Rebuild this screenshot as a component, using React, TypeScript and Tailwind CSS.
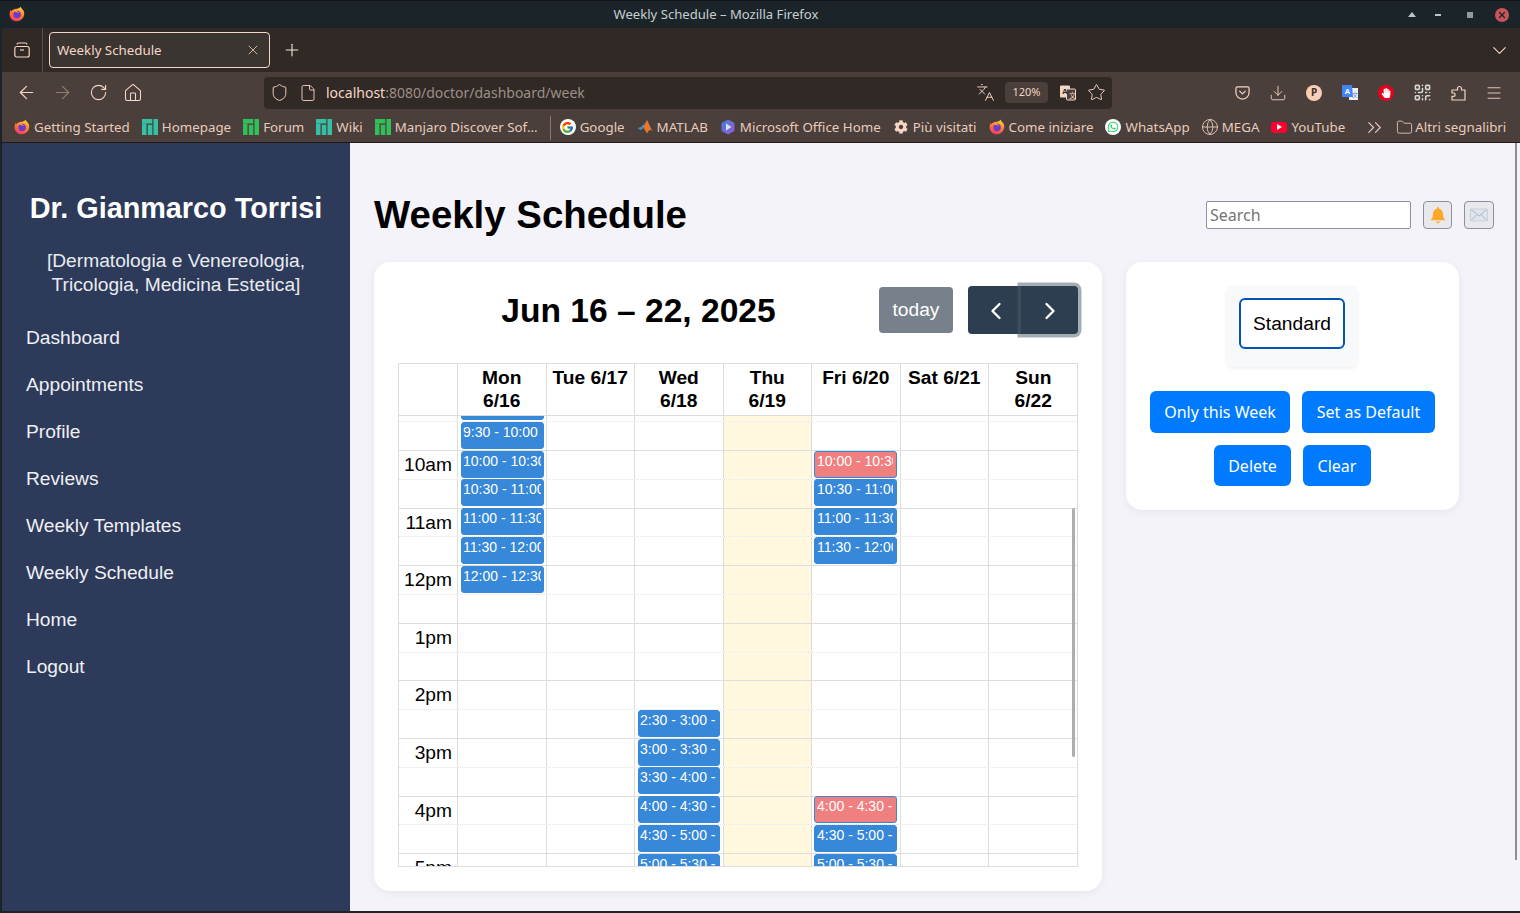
import React from 'react';
import {
  ArrowLeft, ArrowRight, ChevronDown, ChevronLeft, ChevronRight, ChevronsRight, Download, File, Folder, Globe,
  Home, Languages, Menu, Plus, QrCode, RotateCw, Shield, Star, X,
} from 'lucide-react';
import { FaCog, FaHandPaper, FaWhatsapp } from 'react-icons/fa';
import { FcGoogle } from 'react-icons/fc';

const FirefoxLogo = ({ id, size = 16 }: { id: string; size?: number }) => (
  <svg width={size} height={size} viewBox="0 0 16 16" className="shrink-0">
    <defs>
      <linearGradient id={id} x1="0.7" y1="0" x2="0.3" y2="1">
        <stop offset="0" stopColor="#ffd53d" />
        <stop offset="0.5" stopColor="#ff7a2f" />
        <stop offset="1" stopColor="#f5386b" />
      </linearGradient>
    </defs>
    <path d="M11.5 0.5c.3 1.5 1.5 2.2 2.6 3.6 1.6 2.2 1.6 5.6-.2 8-1.5 2-3.6 3.2-5.9 3.2C3.8 15.3.6 12.2.6 8.2c0-1.5.5-3.3 1.3-4.4 0 .6.2 1 .5 1.4.7-1 1.8-1.8 3-2C7 2.800 10.800 2.500 11.500.5z" fill={`url(#${id})`} />
    <circle cx="8.100" cy="8.500" r="3.700" fill="#6d3bc9" />
    <path d="M1.800 5.500c1.700-.4 3.600-.2 5 .6 1 .5 2.300.5 3.200 1-.4-1.400-1.800-2.400-3.400-2.400-1.900 0-3.600.1-4.800.8z" fill="#ff9a2e" />
  </svg>
);

const ManjaroLogo = ({ color }: { color: string }) => (
  <svg width="16" height="16" viewBox="0 0 16 16" className="shrink-0" fill={color}>
    <rect x="0" y="0" width="10.300" height="4.500" />
    <rect x="0" y="4.500" width="4.500" height="11.500" />
    <rect x="5.800" y="5.800" width="4.500" height="10.200" />
    <rect x="11.500" y="0" width="4.500" height="16" />
  </svg>
);

const GoogleIcon = () => (
  <span className="w-4 h-4 rounded-full bg-white flex items-center justify-center shrink-0">
    <FcGoogle size={13} />
  </span>
);

const MatlabIcon = () => (
  <svg width="16" height="16" viewBox="0 0 16 16" className="shrink-0">
    <path d="M0.500 9.300 4.600 7.500 6.300 8.900 4 11.300z" fill="#3f8fc4" />
    <path d="M4.600 7.500 7.600 5.100 9.800 1.300 6.300 8.900z" fill="#4fa6d6" />
    <path d="M9.800 1.300c1.200 0 2.800 6.300 5.700 10.200-1.300-.6-2.300-.9-3.200-.2-.9.700-1.600 2.300-2.400 3.300-.8-2.200-2-4-3.600-5.700z" fill="#e8762b" />
  </svg>
);

const OfficeIcon = () => (
  <svg width="16" height="16" viewBox="0 0 16 16" className="shrink-0">
    <defs>
      <linearGradient id="officeGrad" x1="0" y1="0" x2="1" y2="1">
        <stop offset="0" stopColor="#3f7fe0" />
        <stop offset="1" stopColor="#9a5ad0" />
      </linearGradient>
    </defs>
    <path d="M8 .5 14.500 4v8L8 15.500 1.500 12V4z" fill="url(#officeGrad)" />
    <path d="M6 4.500l5.500 3.500L6 11.500z" fill="#d7e4fb" />
  </svg>
);

const YoutubeIcon = () => (
  <span className="w-4 h-[11px] rounded-[3px] bg-[#ff0033] flex items-center justify-center shrink-0">
    <span className="w-0 h-0 border-y-[3px] border-y-transparent border-l-[5px] border-l-white" />
  </span>
);

const WhatsappIcon = () => (
  <span className="w-4 h-4 rounded-full bg-white flex items-center justify-center shrink-0">
    <FaWhatsapp size={12} color="#25d366" />
  </span>
);

const PageTranslate = () => (
  <svg width="18" height="18" viewBox="0 0 18 18">
    <rect x="1" y="1.500" width="10" height="12" rx="1" fill="#f5d5c5" />
    <rect x="7.500" y="5" width="9" height="11" rx="1" fill="#4a3f3a" stroke="#f5d5c5" />
    <text x="3" y="10" fontSize="8" fontWeight="700" fill="#2f2925" fontFamily="Liberation Sans">A</text>
    <text x="10" y="13.500" fontSize="7" fill="#f5d5c5" fontFamily="Noto Sans CJK SC">文</text>
  </svg>
);

const GoogleTranslate = () => (
  <svg width="16" height="16" viewBox="0 0 16 16">
    <rect x="7" y="3" width="9" height="12" fill="#f1f1f1" />
    <path d="M0 0h10l1 12H0z" fill="#4285f4" />
    <text x="2.500" y="8.500" fontSize="8" fontWeight="700" fill="#fff" fontFamily="Liberation Sans">A</text>
    <text x="10" y="12" fontSize="6" fill="#4285f4" fontFamily="Noto Sans CJK SC">文</text>
  </svg>
);

const PocketIcon = () => (
  <svg width="15" height="15" viewBox="0 0 16 16" fill="none" stroke="currentColor" strokeWidth="1.300">
    <path d="M2.500 2h11A1.500 1.500 0 0 1 15 3.500V8a7 7 0 0 1-14 0V3.500A1.500 1.500 0 0 1 2.500 2z" />
    <path d="M5 6.500l3 3 3-3" strokeLinecap="round" strokeLinejoin="round" />
  </svg>
);

const ExtensionIcon = () => (
  <svg width="16" height="16" viewBox="0 0 16 16" fill="none" stroke="currentColor" strokeWidth="1.200" strokeLinejoin="round">
    <path d="M2 15H15V5H11.500V3.500A2 2 0 0 0 7.500 3.500V5H2V8H3.500A1.700 1.700 0 0 1 3.500 11.400H2Z" />
  </svg>
);

type Bookmark = { label: string; icon: React.ReactNode };

const bookmarks: Bookmark[] = [
  { label: 'Getting Started', icon: <FirefoxLogo id="ffBm1" /> },
  { label: 'Homepage', icon: <ManjaroLogo color="#35bfa4" /> },
  { label: 'Forum', icon: <ManjaroLogo color="#34be5b" /> },
  { label: 'Wiki', icon: <ManjaroLogo color="#35bfa4" /> },
  { label: 'Manjaro Discover Sof...', icon: <ManjaroLogo color="#34be5b" /> },
];

const bookmarks2: Bookmark[] = [
  { label: 'Google', icon: <GoogleIcon /> },
  { label: 'MATLAB', icon: <MatlabIcon /> },
  { label: 'Microsoft Office Home', icon: <OfficeIcon /> },
  { label: 'Più visitati', icon: <FaCog size={14} className="shrink-0 text-[#f5d5c5]" /> },
  { label: 'Come iniziare', icon: <FirefoxLogo id="ffBm2" /> },
  { label: 'WhatsApp', icon: <WhatsappIcon /> },
  { label: 'MEGA', icon: <Globe size={18} strokeWidth={1.200} className="shrink-0" /> },
  { label: 'YouTube', icon: <YoutubeIcon /> },
];

const BookmarkItem = ({ item }: { item: Bookmark }) => (
  <div className="flex items-center gap-1 whitespace-nowrap">
    <span className="w-4 flex justify-center">{item.icon}</span>
    <span>{item.label}</span>
  </div>
);

const navIcon = 'w-9 flex justify-center shrink-0';

const BrowserChrome = () => (
  <div className="shrink-0 font-['Noto_Sans',sans-serif] text-[#f5d5c5]">
    <div className="h-7 bg-[#1b2529] border-t border-[#0f1417] relative flex items-center justify-center text-[13.100px] text-[#c5cdcf] pr-[88px]">
      <span className="absolute left-[9px] top-[5px]"><FirefoxLogo id="ffTitle" /></span>
      Weekly Schedule – Mozilla Firefox
      <div className="absolute right-0 top-0 bottom-0 flex items-center text-[#b9c5c7]">
        <span className="w-0 h-0 border-x-4 border-x-transparent border-b-[5px] border-b-[#b9c5c7] mr-[19px]" />
        <span className="w-[6px] h-[2px] bg-[#b9c5c7] mr-[26px]" />
        <span className="w-[6px] h-[6px] bg-[#8f9b9d] mr-[22px]" />
        <span className="w-[14px] h-[14px] rounded-full bg-[#c9545c] flex items-center justify-center mr-[11px]">
          <X size={10} strokeWidth={3} color="#1b2529" />
        </span>
      </div>
    </div>
    <div className="h-11 bg-[#302926] border-l-2 border-[#1b2529] flex items-center">
      <div className="w-[41px] h-full flex items-center justify-center border-r border-[#5c4f49] pr-px">
        <svg width="16" height="16" viewBox="0 0 16 16" fill="none" stroke="currentColor" strokeWidth="1.200">
          <rect x="0.800" y="4.500" width="14.400" height="10.500" rx="2" />
          <path d="M3 2.500C3 1.500 3.500 1 4.500 1h7c1 0 1.500.5 1.500 1.500" />
          <path d="M6 8h4" />
        </svg>
      </div>
      <div className="ml-[6px] w-[221px] h-9 rounded bg-[#3b3532] border border-[#f5d5c5] flex items-center pl-[7px] pr-[8px] text-[13.300px] justify-between">
        <span className="pt-px">Weekly Schedule</span>
        <X size={16} strokeWidth={1.200} />
      </div>
      <div className="ml-[12px]"><Plus size={20} strokeWidth={1.300} className="text-[#f6e6de]" /></div>
      <div className="ml-auto mr-[9px]"><ChevronDown size={23} strokeWidth={1.200} /></div>
    </div>
    <div className="h-[41px] bg-[#4a3f3a] border-l-2 border-[#1b2529] flex items-center pl-[6px]">
      <div className={navIcon}><ArrowLeft size={21} strokeWidth={1.400} /></div>
      <div className={navIcon}><ArrowRight size={21} strokeWidth={1.400} className="opacity-40" /></div>
      <div className={navIcon}><RotateCw size={19} strokeWidth={1.400} /></div>
      <div className={navIcon}><Home size={20} strokeWidth={1.300} className="-ml-[2px]" /></div>
      <div className="ml-[112px] w-[848px] h-8 rounded bg-[#302926] flex items-center">
        <Shield size={19} strokeWidth={1.200} className="ml-[6px]" />
        <File size={18} strokeWidth={1.200} className="ml-[10px]" />
        <span className="ml-[9px] text-[14px]">localhost<span className="text-[#9d8f88]">:8080/doctor/dashboard/week</span></span>
        <div className="ml-auto flex items-center">
          <Languages size={19} strokeWidth={1.200} />
          <span className="ml-[10px] w-[43px] h-[21px] rounded bg-[#4a3f3a] text-[11px] flex items-center justify-center">120%</span>
          <span className="ml-[11px] flex"><PageTranslate /></span>
          <Star size={19} strokeWidth={1.200} className="ml-[10px] mr-[6px]" />
        </div>
      </div>
      <div className="ml-[112px] flex items-center">
        <div className={navIcon}><PocketIcon /></div>
        <div className={navIcon}><Download size={18} strokeWidth={1.200} /></div>
        <div className={navIcon}>
          <span className="w-4 h-4 rounded-full bg-[#fbcdb8] text-[#3a2f2a] text-[10px] font-bold flex items-center justify-center">P</span>
        </div>
        <div className={navIcon}><GoogleTranslate /></div>
        <div className={navIcon}>
          <span className="w-4 h-4 rounded-full bg-[#e8001c] flex items-center justify-center"><FaHandPaper size={10} color="#fff" /></span>
        </div>
        <div className={navIcon}><QrCode size={19} strokeWidth={2} className="text-[#d6d6d6]" /></div>
        <div className={navIcon}><ExtensionIcon /></div>
        <div className={navIcon}><Menu size={18} strokeWidth={1.200} /></div>
      </div>
    </div>
    <div className="h-[30px] bg-[#4a3f3a] border-l-2 border-[#1b2529] border-b border-b-[#1f1a18] flex items-center pl-3 text-[13.330px] text-[#e8cbbd]">
      <div className="flex items-center gap-3">
        {bookmarks.map(b => <BookmarkItem key={b.label} item={b} />)}
      </div>
      <span className="w-px h-6 bg-[#8b766c] mx-[9px] ml-3" />
      <div className="flex items-center gap-3">
        {bookmarks2.map(b => <BookmarkItem key={b.label} item={b} />)}
      </div>
      <ChevronsRight size={23} strokeWidth={1.200} className="ml-[18px]" />
      <div className="ml-[10px] flex items-center gap-[2px] whitespace-nowrap">
        <Folder size={17} strokeWidth={1.200} />
        <span>Altri segnalibri</span>
      </div>
    </div>
  </div>
);

const sidebarLinks = ['Dashboard', 'Appointments', 'Profile', 'Reviews', 'Weekly Templates', 'Weekly Schedule', 'Home', 'Logout'];

const Sidebar = () => (
  <aside className="w-[348px] shrink-0 bg-[#2d3a5a] text-white flex flex-col px-6 pt-[47px]">
    <h2 className="text-[28.800px] leading-[37px] font-bold text-center whitespace-nowrap -mx-4">Dr. Gianmarco Torrisi</h2>
    <p className="mt-[22px] text-[19.200px] leading-[24px] text-center text-[#e8ebf0]">[Dermatologia e Venereologia, Tricologia, Medicina Estetica]</p>
    <nav className="mt-[29px] flex flex-col gap-[24px] text-[19.200px] leading-[23px]">
      {sidebarLinks.map(l => <a key={l} className="text-[#eef0f4]">{l}</a>)}
    </nav>
  </aside>
);

type Ev = { text: string; red?: boolean };
const hours = ['9', '10', '11', '12', '1', '2', '3', '4', '5'];
const suffix = (h: string) => (['9', '10', '11'].includes(h) ? 'am' : 'pm');
const next = (h: string) => (h === '12' ? '1' : String(Number(h) + 1));

const slotEvents: Record<number, Record<number, Ev>> = {};
const addEvent = (day: number, slot: number, red?: boolean) => {
  const h = hours[Math.floor(slot / 2)];
  const half = slot % 2 === 1;
  const text = half ? `${h}:30 - ${next(h)}:00 -` : `${h}:00 - ${h}:30 -`;
  slotEvents[slot] = { ...(slotEvents[slot] || {}), [day]: { text, red } };
};
[0, 1, 2, 3, 4, 5, 6].forEach(s => addEvent(0, s));
[11, 12, 13, 14, 15, 16].forEach(s => addEvent(2, s));
addEvent(4, 2, true);
[3, 4, 5].forEach(s => addEvent(4, s));
addEvent(4, 14, true);
[15, 16].forEach(s => addEvent(4, s));

const days = ['Mon 6/16', 'Tue 6/17', 'Wed 6/18', 'Thu 6/19', 'Fri 6/20', 'Sat 6/21', 'Sun 6/22'];

const cellPad = (day: number) => {
  if (day === 2) return 'pl-[3px] pr-[3px]';
  if (day === 4) return 'pl-[2px] pr-[3px]';
  return 'pl-[3px] pr-[2px]';
};

const Calendar = () => (
  <section className="w-[728px] h-[629px] shrink-0 bg-white rounded-2xl shadow-[0_2px_8px_rgba(0,0,0,0.06)] px-6 pt-6 font-['Liberation_Sans',sans-serif]">
    <div className="h-[48px] flex items-center">
      <h3 className="w-[481px] text-center text-[33.600px] leading-[50px] pt-px font-bold text-black whitespace-nowrap">Jun 16 – 22, 2025</h3>
      <button className="w-[74px] h-[46px] rounded bg-[#77818c] text-white text-[19.200px]">today</button>
      <div className="ml-[15px] flex">
        <button className="w-[53px] h-[48px] pl-[2px] pt-px rounded-l bg-[#2c3e50] text-white flex items-center justify-center">
          <ChevronLeft size={28} strokeWidth={2} />
        </button>
        <button className="relative w-[57px] h-[48px] pt-px rounded-r bg-[#2c3e50] text-white flex items-center justify-center shadow-[0_0_0_3.500px_rgba(76,91,106,0.5)]">
          <ChevronRight size={28} strokeWidth={2} />
        </button>
      </div>
    </div>
    <div className="mt-[29px] w-[680px] h-[504px] border border-[#ddd] flex flex-col">
      <div className="grid grid-cols-[59px_repeat(7,88.500px)] h-[52px] shrink-0 border-b border-[#ddd] text-[19.200px] leading-[23px] font-bold text-black text-center">
        <div className="border-r border-[#ddd]" />
        {days.map(d => (
          <div key={d} className="border-r border-[#ddd] last:border-r-0 pt-[2px] px-[6px]">{d}</div>
        ))}
      </div>
      <div className="relative flex-1 overflow-hidden">
        <div className="-mt-[23.600px]">
          {Array.from({ length: 18 }, (_, slot) => {
            const hour = slot % 2 === 0 ? hours[slot / 2] : null;
            return (
              <div key={slot} className={`grid grid-cols-[59px_repeat(7,88.500px)] h-[28.800px] border-t ${hour ? 'border-solid border-[#ddd]' : 'border-dotted border-[#e4e4e4]'}`}>
                <div className="border-r border-[#ddd] text-right pr-[5px] pt-[2px] text-[19.200px] leading-[24px] text-black">
                  {hour && slot > 0 ? `${hour}${suffix(hour)}` : ''}
                </div>
                {days.map((d, i) => {
                  const ev = slotEvents[slot]?.[i];
                  return (
                    <div key={d} className={`border-r border-[#ddd] last:border-r-0 ${cellPad(i)} ${i === 3 ? 'bg-[#fff8de]' : ''}`}>
                      {ev && (
                        <div className={`-mt-[0.400px] h-[27px] rounded-[3px] border border-[#3788d8] text-white text-[14px] leading-[17px] whitespace-nowrap pt-px ${i === 4 ? 'px-[2px]' : 'px-[1px]'} ${ev.red ? 'bg-[#f08080]' : 'bg-[#3788d8]'}`}>
                          <div className="overflow-hidden mr-[1px]">{ev.text}</div>
                        </div>
                      )}
                    </div>
                  );
                })}
              </div>
            );
          })}
        </div>
        <div className="absolute right-[2px] top-[92px] w-[3px] h-[249px] rounded-full bg-[#adadad]" />
      </div>
    </div>
  </section>
);

const blueButton = "rounded-md bg-[#007bff] text-white text-[16px] font-['Noto_Sans',sans-serif] flex items-center justify-center";

const TemplatesCard = () => (
  <section className="w-[333px] h-[248px] shrink-0 bg-white rounded-2xl shadow-[0_2px_8px_rgba(0,0,0,0.06)] flex flex-col items-center pt-6">
    <div className="w-[130px] h-[81px] mr-[2px] rounded-md bg-[#f8f9fa] shadow-[0_1px_4px_rgba(0,0,0,0.08)] flex items-start justify-center pt-3">
      <button className="w-[106px] h-[51px] pt-px pl-px rounded-md border-2 border-[#0056b3] bg-white text-black text-[19.200px] font-['Liberation_Sans',sans-serif]">Standard</button>
    </div>
    <div className="mt-6 flex gap-3">
      <button className={`${blueButton} w-[140px] h-[42px]`}>Only this Week</button>
      <button className={`${blueButton} w-[133px] h-[42px]`}>Set as Default</button>
    </div>
    <div className="mt-3 flex gap-3">
      <button className={`${blueButton} w-[77px] h-[41px]`}>Delete</button>
      <button className={`${blueButton} w-[68px] h-[41px]`}>Clear</button>
    </div>
  </section>
);

const BellIcon = () => (
  <svg width="16" height="18" viewBox="0 0 16 18" fill="#ffa726">
    <path d="M8 1a1 1 0 0 1 1 1v.700c2.600.5 4 2.600 4 5.300 0 3 .8 4.300 2 5.500v.800H1v-.800C2.200 12.300 3 11 3 8c0-2.700 1.400-4.800 4-5.300V2a1 1 0 0 1 1-1z" />
    <path d="M6.200 15.500h3.600a1.800 1.800 0 0 1-3.600 0z" />
  </svg>
);

const MailIcon = () => (
  <svg width="18" height="14" viewBox="0 0 18 14">
    <rect x="0.500" y="1" width="17" height="12" rx="1" fill="#dfe5ea" stroke="#c6d2da" />
    <path d="M1 1.500 9 8l8-6.500M1 12.500l6-6M17 12.500l-6-6" fill="none" stroke="#a8bac6" strokeWidth="1" />
  </svg>
);

const iconButton = 'h-7 rounded border border-[#8f8f9d] bg-[#e9e9ed] flex items-center justify-center';

export default function App() {
  return (
    <div className="w-[1520px] h-[913px] overflow-hidden flex flex-col bg-[#1b2529]">
      <BrowserChrome />
      <div className="flex flex-1 min-h-0 border-l-2 border-[#1b2529] border-b-2 font-['Liberation_Sans',sans-serif]">
        <Sidebar />
        <main className="relative flex-1 bg-[#f3f3f9] pl-[24px]">
          <header className="h-[119px] flex items-start">
            <h1 className="mt-[47px] text-[38.400px] leading-[50px] font-bold text-black">Weekly Schedule</h1>
            <div className="ml-auto mr-[26px] mt-[58px] flex items-center">
              <input
                placeholder="Search"
                className="w-[205px] h-7 rounded-[2px] border border-[#8f8f9d] bg-white px-[3px] text-[16px] font-['Noto_Sans',sans-serif] placeholder:text-[#757575]"
              />
              <button className={`${iconButton} ml-3 w-[29px]`}><BellIcon /></button>
              <button className={`${iconButton} ml-3 w-[30px]`}><MailIcon /></button>
            </div>
          </header>
          <div className="flex gap-6 items-start">
            <Calendar />
            <TemplatesCard />
          </div>
          <div className="absolute right-[3px] top-0 w-[2px] h-[717px] bg-[#8e8e8e]" />
        </main>
      </div>
    </div>
  );
}
